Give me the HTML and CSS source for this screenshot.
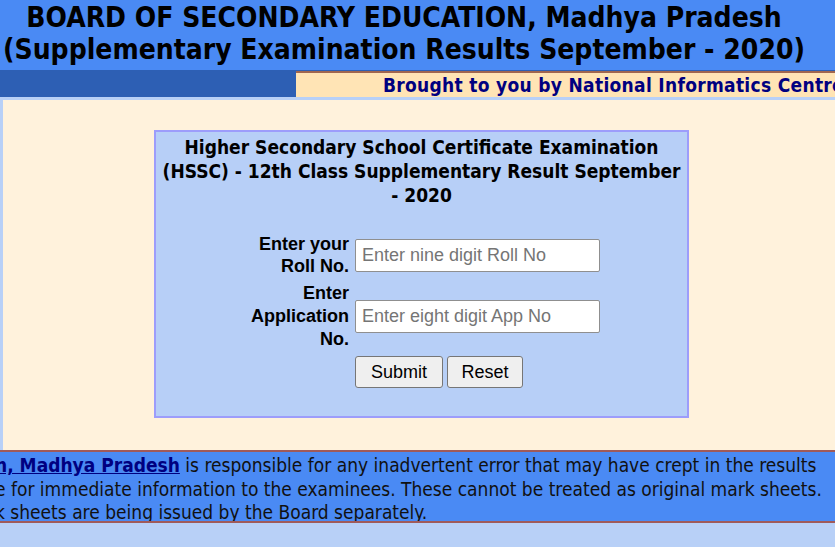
FILE: index.html
```html
<!DOCTYPE html>
<html lang="en">
<head>
<meta charset="utf-8">
<title>MP Board Supplementary Result 2020</title>
<link rel="stylesheet" href="styles.css">
</head>
<body>
<div class="page">
  <header class="header">
    <h1 class="title">BOARD OF SECONDARY EDUCATION, Madhya Pradesh<br>(Supplementary Examination Results September - 2020)</h1>
  </header>
  <div class="nicbar">
    <div class="nicbar-left"></div>
    <div class="nicbar-right">Brought to you by National Informatics Centre</div>
  </div>
  <main class="content">
    <section class="result-box">
      <h2 class="exam-title">Higher Secondary School Certificate Examination (HSSC) - 12th Class Supplementary Result September <span class="nowrap">- 2020</span></h2>
      <form class="result-form">
        <label class="field-label" for="roll">Enter your<br>Roll No.</label>
        <input class="field-input" id="roll" type="text" placeholder="Enter nine digit Roll No">
        <label class="field-label field-label-tall" for="app">Enter<br>Application<br>No.</label>
        <input class="field-input" id="app" type="text" placeholder="Enter eight digit App No">
        <span></span>
        <div class="buttons">
          <button type="button" class="btn btn-submit">Submit</button>
          <button type="reset" class="btn btn-reset">Reset</button>
        </div>
      </form>
    </section>
  </main>
  <footer class="disclaimer">
    <p class="disclaimer-text"><a href="#" class="board-link">n, Madhya Pradesh</a> is responsible for any inadvertent error that may have crept in the results<br>e for immediate information to the examinees. These cannot be treated as original mark sheets.<br>k sheets are being issued by the Board separately.</p>
  </footer>
  <div class="bottom"></div>
</div>
</body>
</html>
```
FILE: styles.css
```css
html, body {
  margin: 0;
  padding: 0;
}
body {
  background: #b8d0f7;
  font-family: "DejaVu Sans Condensed", "DejaVu Sans", sans-serif;
  overflow: hidden;
}
.page {
  width: 835px;
  height: 547px;
  overflow: hidden;
  display: flex;
  flex-direction: column;
}
.header {
  background: #4a8af4;
  height: 70px;
  padding-right: 27px;
}
.title {
  margin: 0;
  padding-top: 2px;
  font-size: 28px;
  line-height: 32px;
  font-weight: bold;
  color: #000;
  text-align: center;
  white-space: nowrap;
}
.nicbar {
  display: flex;
  height: 27px;
  background: #2d5fb4;
  border-bottom: 3px solid #b8d0f7;
}
.nicbar-left {
  width: 296px;
  flex: none;
}
.nicbar-right {
  flex: 1;
  margin-top: 1px;
  border-top: 2px solid #a0664f;
  background: #ffe4b5;
  color: #000080;
  font-weight: bold;
  font-size: 19px;
  letter-spacing: 0.3px;
  line-height: 25px;
  padding-left: 87px;
  white-space: nowrap;
  overflow: hidden;
}
.content {
  background: #fff2dc;
  border-left: 3px solid #b8d0f7;
  height: 350px;
  padding-top: 30px;
  box-sizing: border-box;
}
.result-box {
  margin-left: 151px;
  width: 531px;
  height: 284px;
  background: #b7cff7;
  border: 2px solid #9d9dfb;
  box-sizing: content-box;
}
.exam-title {
  margin: 0;
  padding-top: 3px;
  font-size: 19px;
  line-height: 24px;
  font-weight: bold;
  text-align: center;
  color: #000;
}
.nowrap {
  white-space: nowrap;
}
.result-form {
  margin-top: 26px;
  padding-left: 8px;
  display: grid;
  grid-template-columns: auto 245px;
  justify-content: center;
  align-items: center;
  column-gap: 6px;
  row-gap: 5px;
}
.field-label {
  font-family: "Liberation Sans", Arial, sans-serif;
  font-weight: bold;
  font-size: 18px;
  line-height: 22px;
  text-align: right;
  color: #000;
}
.field-label-tall {
  line-height: 23px;
}
.field-input {
  box-sizing: border-box;
  width: 245px;
  height: 33px;
  padding: 0 6px;
  font-family: "Liberation Sans", Arial, sans-serif;
  font-size: 18px;
  border: 1px solid #8f8f8f;
  border-radius: 2px;
  background: #fff;
}
.field-input::placeholder {
  color: #757575;
}
.buttons {
  display: flex;
  gap: 4px;
}
.btn {
  font-family: "Liberation Sans", Arial, sans-serif;
  font-size: 18px;
  height: 32px;
  padding: 0 12px;
  background: #efefef;
  border: 1px solid #767676;
  border-radius: 3px;
  color: #000;
}
.btn-submit { width: 88px; }
.btn-reset { width: 76px; }
.disclaimer {
  background: #4a8af4;
  border-top: 2px solid #a05a5a;
  border-bottom: 2px solid #a05a5a;
  height: 69px;
  overflow: hidden;
}
.disclaimer-text {
  margin: 2px 0 0 -5px;
  font-size: 19px;
  line-height: 23.5px;
  color: #111;
  white-space: nowrap;
}
.board-link {
  color: #000080;
  font-weight: bold;
  text-decoration: underline;
}
.bottom {
  flex: 1;
  background: #b8d0f7;
}
```
